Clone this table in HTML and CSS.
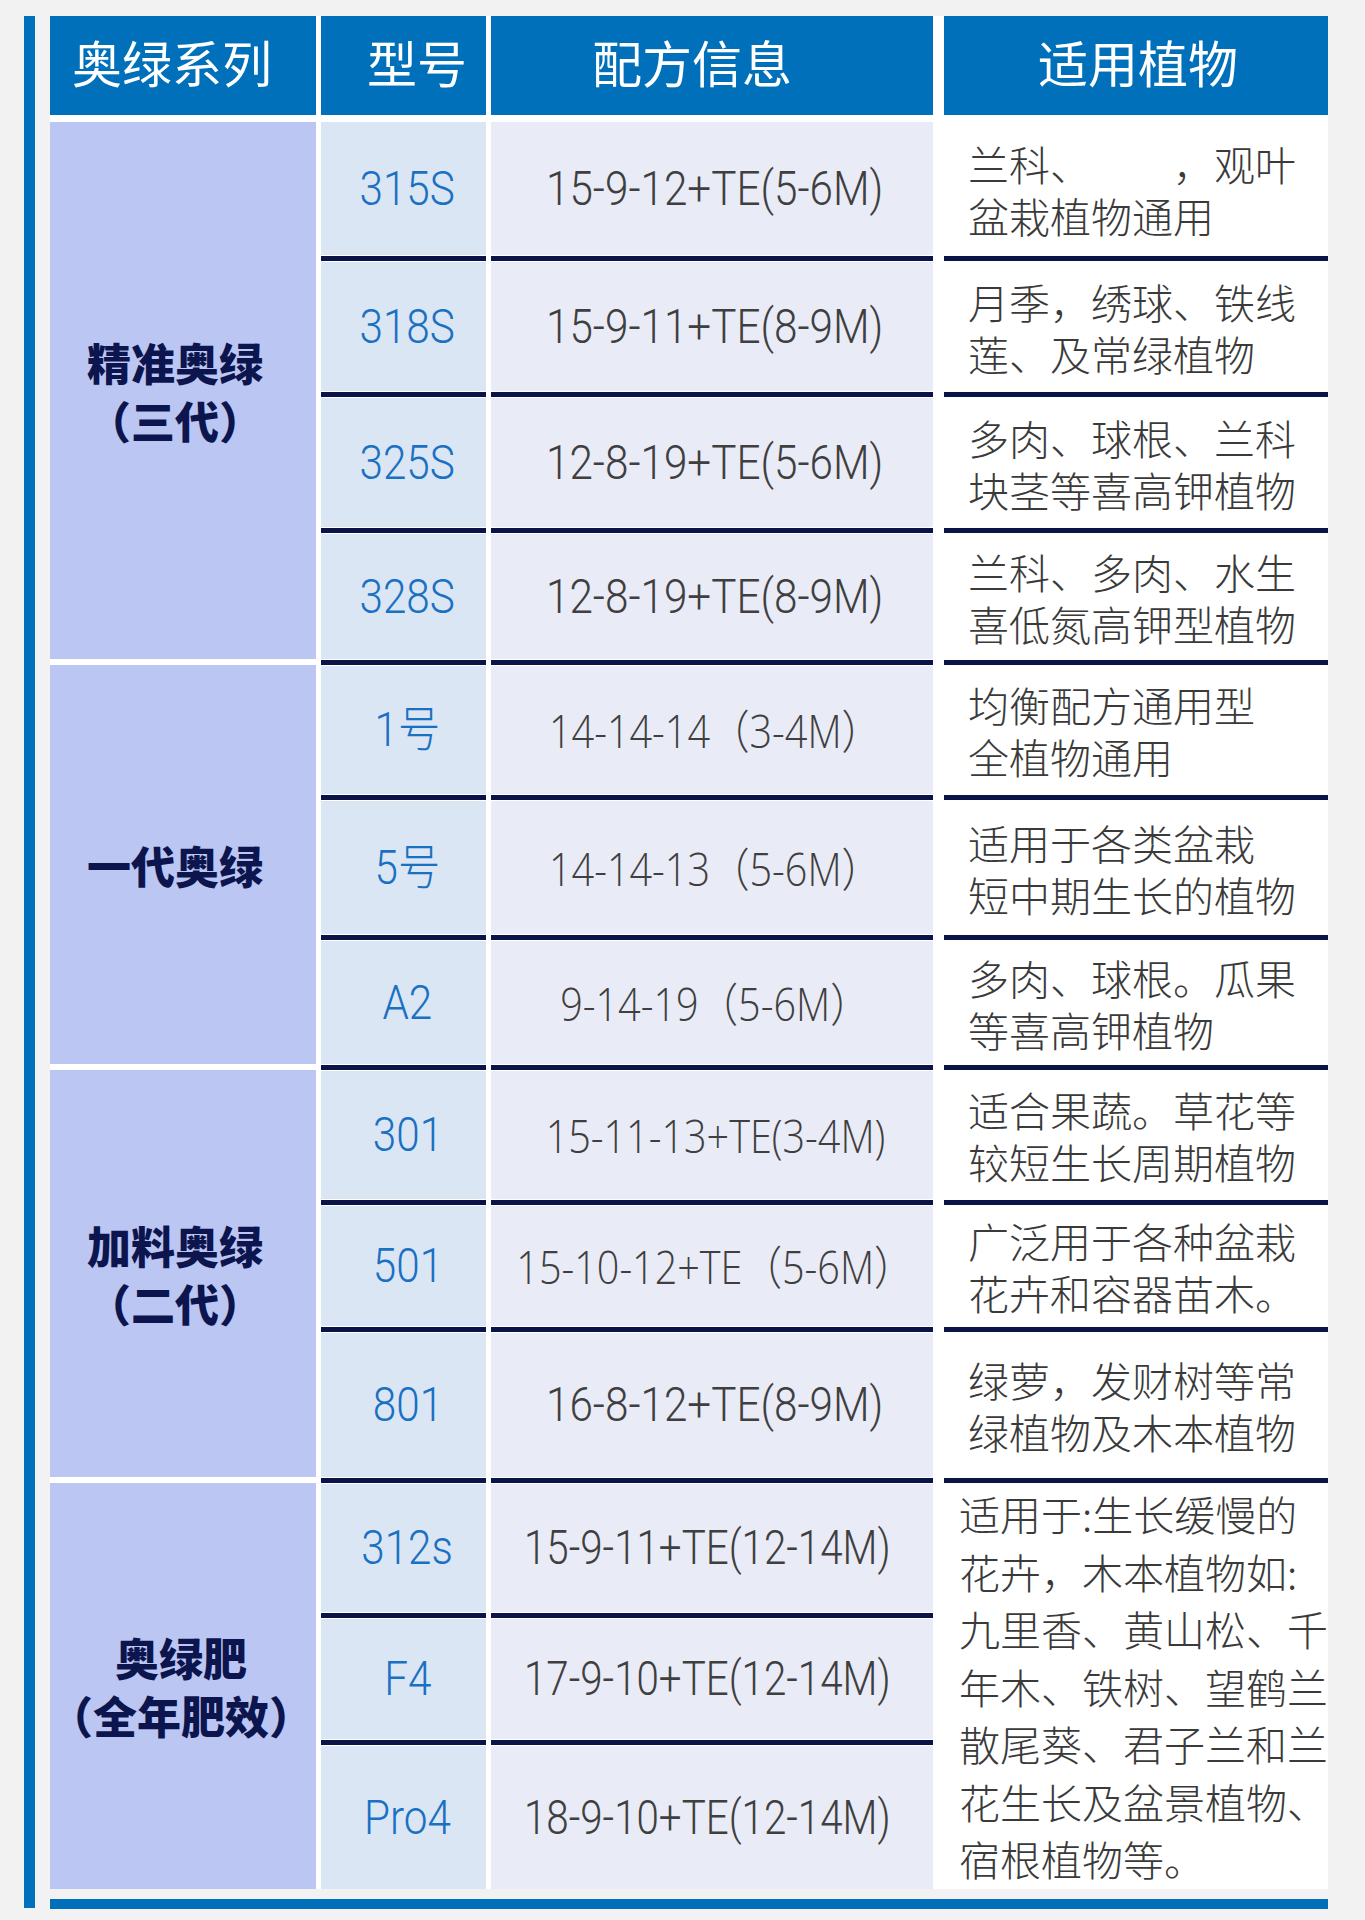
FILE: index.html
```html
<!DOCTYPE html>
<html lang="zh-CN">
<head>
<meta charset="utf-8">
<title>奥绿系列</title>
<link rel="stylesheet" href="styles.css">
</head>
<body>
<div class="page">
  <div class="side-bar"></div>
  <div class="sheet">
    <div class="thead">
      <div class="th th-series">奥绿系列</div>
      <div class="th th-model">型号</div>
      <div class="th th-formula">配方信息</div>
      <div class="th th-plant">适用植物</div>
    </div>
    <div class="tbody">
      <!-- group 1 -->
      <div class="series span4"><div>精准奥绿</div><div>（三代）</div></div>
      <div class="cell model"><span class="num">315S</span></div>
      <div class="cell formula"><span class="num">15-9-12+TE(5-6M)</span></div>
      <div class="cell plant">兰科、　　&#8194;，观叶<br>盆栽植物通用</div>

      <div class="cell model sep"><span class="num">318S</span></div>
      <div class="cell formula sep"><span class="num">15-9-11+TE(8-9M)</span></div>
      <div class="cell plant sep">月季，绣球、铁线<br>莲、及常绿植物</div>

      <div class="cell model sep"><span class="num">325S</span></div>
      <div class="cell formula sep"><span class="num">12-8-19+TE(5-6M)</span></div>
      <div class="cell plant sep">多肉、球根、兰科<br>块茎等喜高钾植物</div>

      <div class="cell model sep"><span class="num">328S</span></div>
      <div class="cell formula sep"><span class="num">12-8-19+TE(8-9M)</span></div>
      <div class="cell plant sep">兰科、多肉、水生<br>喜低氮高钾型植物</div>

      <!-- group 2 -->
      <div class="series span3 next"><div>一代奥绿</div></div>
      <div class="cell model sep"><span class="num">1号</span></div>
      <div class="cell formula sep"><span class="num wide">14-14-14（3-4M）</span></div>
      <div class="cell plant sep">均衡配方通用型<br>全植物通用</div>

      <div class="cell model sep"><span class="num">5号</span></div>
      <div class="cell formula sep"><span class="num wide">14-14-13（5-6M）</span></div>
      <div class="cell plant sep">适用于各类盆栽<br>短中期生长的植物</div>

      <div class="cell model sep"><span class="num">A2</span></div>
      <div class="cell formula sep"><span class="num wide">9-14-19（5-6M）</span></div>
      <div class="cell plant sep">多肉、球根。瓜果<br>等喜高钾植物</div>

      <!-- group 3 -->
      <div class="series span3 next"><div>加料奥绿</div><div>（二代）</div></div>
      <div class="cell model sep"><span class="num">301</span></div>
      <div class="cell formula sep"><span class="num wide">15-11-13+TE(3-4M)</span></div>
      <div class="cell plant sep">适合果蔬。草花等<br>较短生长周期植物</div>

      <div class="cell model sep"><span class="num">501</span></div>
      <div class="cell formula sep"><span class="num wide">15-10-12+TE（5-6M）</span></div>
      <div class="cell plant sep">广泛用于各种盆栽<br>花卉和容器苗木。</div>

      <div class="cell model sep"><span class="num">801</span></div>
      <div class="cell formula sep"><span class="num">16-8-12+TE(8-9M)</span></div>
      <div class="cell plant sep">绿萝，发财树等常<br>绿植物及木本植物</div>

      <!-- group 4 -->
      <div class="series span3 next last"><div>奥绿肥</div><div>（全年肥效）</div></div>
      <div class="cell model sep"><span class="num">312s</span></div>
      <div class="cell formula sep long"><span class="num">15-9-11+TE(12-14M)</span></div>
      <div class="cell plant sep merged">适用于:生长缓慢的<br>花卉，木本植物如:<br>九里香、黄山松、千<br>年木、铁树、望鹤兰<br>散尾葵、君子兰和兰<br>花生长及盆景植物、<br>宿根植物等。</div>

      <div class="cell model sep"><span class="num">F4</span></div>
      <div class="cell formula sep long"><span class="num">17-9-10+TE(12-14M)</span></div>

      <div class="cell model sep"><span class="num">Pro4</span></div>
      <div class="cell formula sep long"><span class="num">18-9-10+TE(12-14M)</span></div>
    </div>
    <div class="bottom-bar"></div>
  </div>
</div>
</body>
</html>
```
FILE: styles.css
```css
html, body {
  margin: 0;
  padding: 0;
  background: #f2f2f2;
}

.page {
  display: flex;
  align-items: flex-start;
  padding: 16px 0 0 24px;
  height: 1920px;
  box-sizing: border-box;
}

.side-bar {
  flex: none;
  width: 11px;
  height: 1892px;
  background: #0070ba;
  margin-right: 15px;
}

.sheet {
  flex: none;
  width: 1278px;
  display: flex;
  flex-direction: column;
}

.thead,
.tbody {
  display: grid;
  grid-template-columns: 266px 5px 165px 5px 442px 11px 384px;
  background: #ffffff;
}

.thead {
  height: 99px;
  padding-bottom: 7px;
}

.th {
  background: #0070ba;
  color: #ffffff;
  font-family: "Noto Sans CJK SC", sans-serif;
  font-weight: 400;
  font-size: 50px;
  line-height: 1;
  display: flex;
  align-items: center;
  justify-content: center;
  white-space: nowrap;
  padding-bottom: 9px;
}

.th-series { grid-column: 1; padding-right: 22px; }
.th-model { grid-column: 3; padding-left: 27px; }
.th-formula { grid-column: 5; padding-right: 40px; }
.th-plant { grid-column: 7; padding-left: 4px; }

.tbody {
  grid-template-rows: 133px 136px 136px 132px 135px 140px 130px 135px 127px 151px 135px 127px 150px;
}

.series {
  grid-column: 1;
  background: #bbc7f2;
  color: #0d154f;
  font-family: "Noto Sans CJK SC", sans-serif;
  font-weight: 900;
  font-size: 44px;
  line-height: 58px;
  display: flex;
  flex-direction: column;
  align-items: center;
  justify-content: center;
  padding-right: 16px;
  white-space: nowrap;
}

.series.span4 { grid-row: span 4; }
.series.span3 { grid-row: span 3; }
.series.next { margin-top: 6px; }
.series.last { padding-right: 4px; }

.cell {
  --bg: #ffffff;
  background: var(--bg);
  display: flex;
  align-items: center;
  white-space: nowrap;
}

.cell.sep {
  padding-top: 7px;
  background: linear-gradient(to bottom, #ffffff 0 1px, #0b1446 1px 6px, #ffffff 6px 7px, var(--bg) 7px 100%);
}

.model {
  grid-column: 3;
  --bg: #dbe6f5;
  justify-content: center;
  color: #1a70c2;
  font-family: "Roboto", "Noto Sans CJK SC", sans-serif;
  font-weight: 300;
  font-size: 48px;
  padding-left: 8px;
}

.formula {
  grid-column: 5;
  --bg: #e9ebf7;
  justify-content: center;
  color: #3f3f3f;
  font-family: "Roboto", "Noto Sans CJK SC", sans-serif;
  font-weight: 300;
  font-size: 48px;
  padding-left: 6px;
}

.formula.long {
  padding-left: 0;
  padding-right: 10px;
}

.num {
  display: inline-block;
  transform: scaleX(0.88);
  line-height: 1;
}

.formula.long .num {
  transform: scaleX(0.84);
}

.num.wide {
  font-family: "Open Sans", "Noto Sans", "Noto Sans CJK SC", sans-serif;
  font-weight: 300;
  font-size: 46px;
  transform: scaleX(0.86);
}

.plant {
  grid-column: 7;
  --bg: #ffffff;
  color: #3a3a3a;
  font-family: "Noto Sans CJK SC", sans-serif;
  font-weight: 300;
  font-size: 41px;
  line-height: 52px;
  padding-left: 24px;
}

.plant.merged {
  grid-row: span 3;
  line-height: 57.5px;
  padding-left: 15px;
}

.bottom-bar {
  margin-top: 10px;
  height: 10px;
  background: #0070ba;
}
```
